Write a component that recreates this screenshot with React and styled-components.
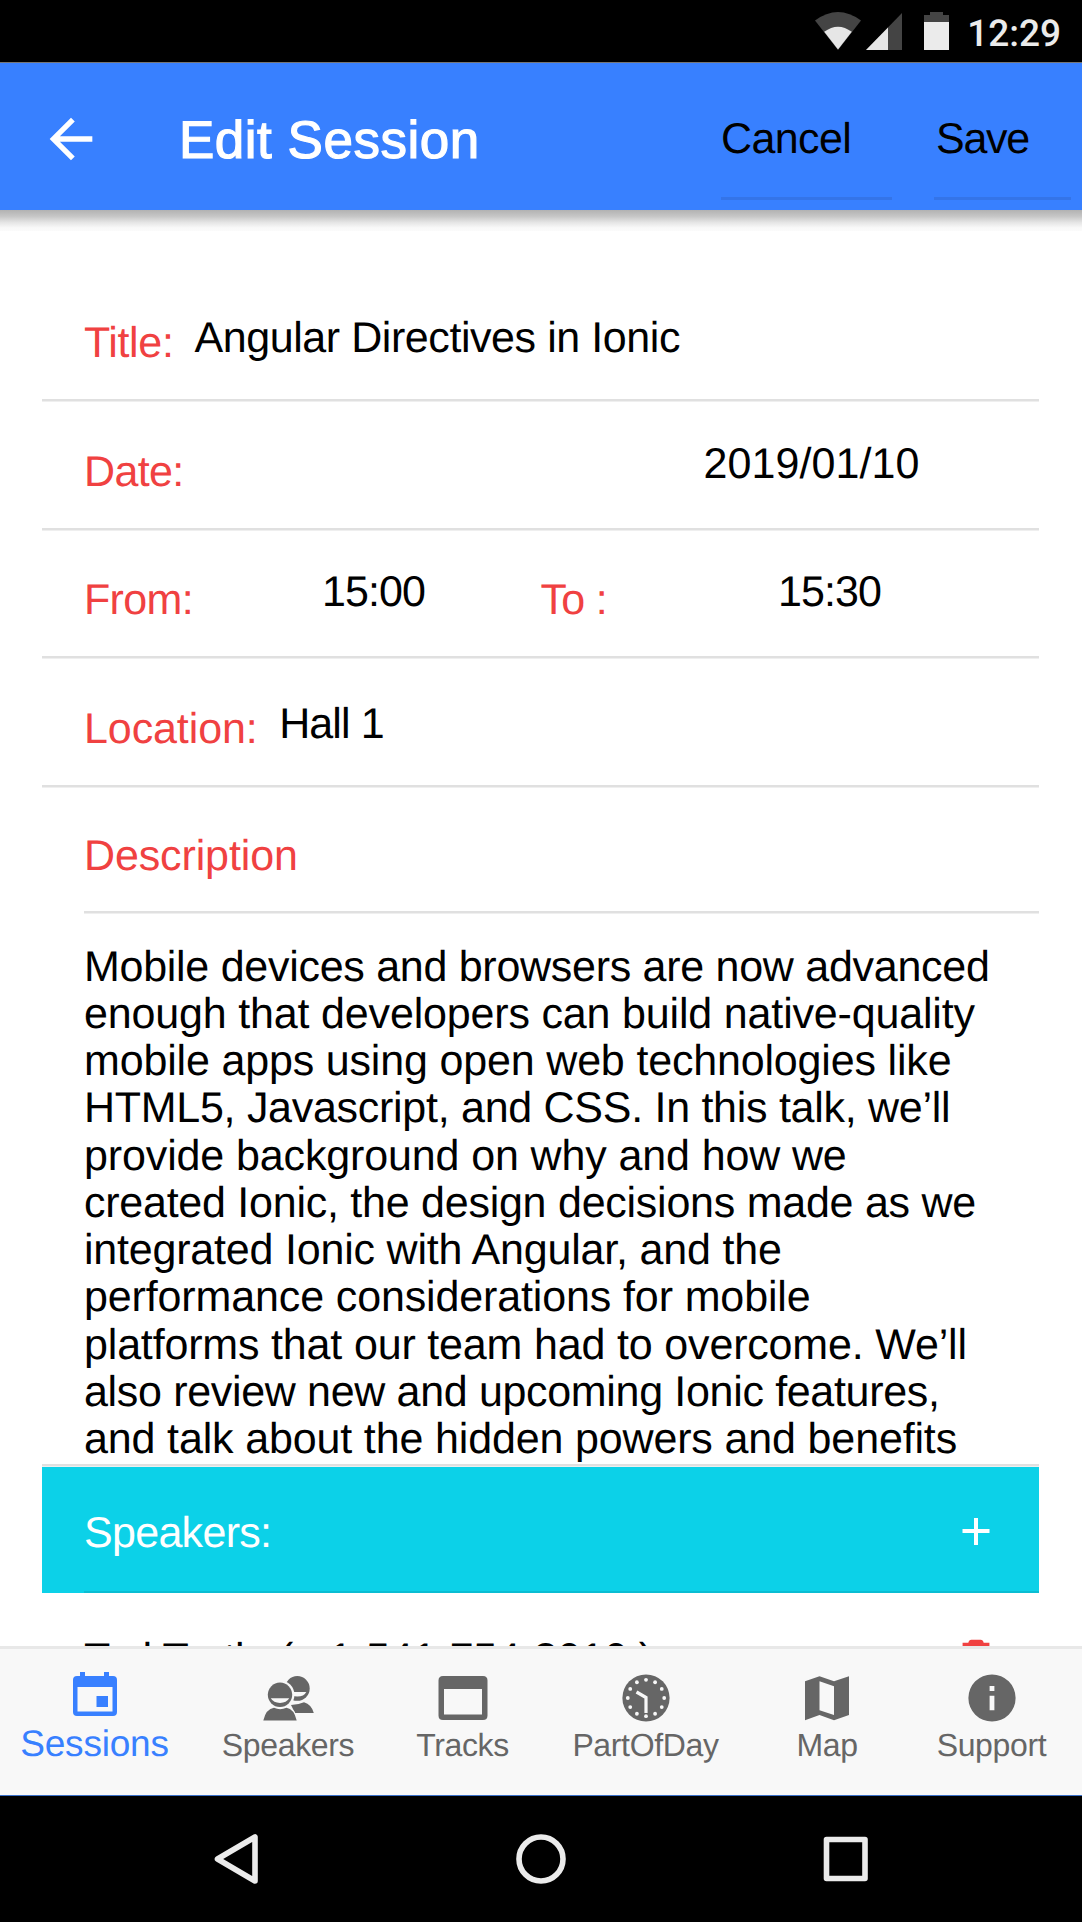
import React from "react";
import styled, { createGlobalStyle } from "styled-components";

const Global = createGlobalStyle`
  * { box-sizing: border-box; }
  body { margin: 0; background: #fff; font-family: "Liberation Sans", Arial, sans-serif; text-rendering: geometricPrecision; }
`;

const Screen = styled.div`
  width: 1082px;
  height: 1922px;
  display: flex;
  flex-direction: column;
  overflow: hidden;
  background: #fff;
`;

const StatusBar = styled.div`
  height: 63px;
  flex: none;
  background: #000;
  border-bottom: 1px solid #757575;
  display: flex;
  align-items: flex-start;
  justify-content: flex-end;
  padding: 12px 21px 0 0;
`;

const StatusIcon = styled.svg`
  display: block;
  flex: none;
  margin-right: ${(p) => p.$gap}px;
`;

const Clock = styled.span`
  font-family: Roboto, sans-serif;
  font-size: 37px;
  font-weight: 500;
  line-height: 42px;
  margin-top: 2px;
  color: #ebebeb;
`;

const Header = styled.header`
  height: 147px;
  flex: none;
  background: #3880ff;
  display: flex;
  align-items: flex-start;
  padding: 0 11px 0 39px;
`;

const HeaderShade = styled.div`
  height: 21px;
  flex: none;
  background: linear-gradient(#b2b2b2, #c6c6c6 30%, #e6e6e6 60%, #f9f9f9 85%, #fbfbfb);
`;

const BackIcon = styled.svg`
  flex: none;
  margin-top: 44px;
`;

const Heading = styled.h1`
  margin: 0 0 0 76px;
  flex: 1;
  font-size: 53px;
  font-weight: 400;
  line-height: 60px;
  padding-top: 48px;
  letter-spacing: 0.5px;
  color: #fff;
  -webkit-text-stroke: 1.2px #fff;
`;

const HeaderAction = styled.a`
  width: ${(p) => p.$width}px;
  height: 137px;
  margin-left: ${(p) => p.$gap || 0}px;
  padding: 51px 0 0 ${(p) => p.$indent || 0}px;
  font-size: 43px;
  line-height: 50px;
  letter-spacing: ${(p) => p.$track}px;
  color: #000;
  box-shadow: inset 0 -3px #3474e8;
`;

const Form = styled.main`
  flex: 1;
  min-height: 0;
  overflow: hidden;
  padding: 42px 42.6px 0 42px;
  font-size: 43px;
  line-height: 50px;
  letter-spacing: -0.2px;
`;

const rule = "inset 0 -1px #efefef, inset 0 -3px #e0e0e0";

const Row = styled.div`
  height: 128.8px;
  padding: 0 42px;
  display: flex;
  box-shadow: ${rule};
`;

const Label = styled.label`
  padding-top: 44.8px;
  margin-right: ${(p) => p.$gap || 0}px;
  letter-spacing: ${(p) => p.$track || -0.65}px;
  color: #f04141;
  white-space: nowrap;
`;

const Value = styled.span`
  padding-top: ${(p) => p.$top || 39.7}px;
  letter-spacing: ${(p) => p.$track || -0.43}px;
  white-space: nowrap;
`;

const Half = styled.div`
  display: flex;
  width: ${(p) => p.$width}px;
  justify-content: space-between;
`;

const Spacer = styled.div`
  flex: 1;
`;

const SectionLabel = styled.div`
  height: 126px;
  margin-left: 42px;
  padding-top: 42.5px;
  color: #f04141;
  letter-spacing: -0.12px;
  box-shadow: ${rule};
`;

const Description = styled.div`
  height: 553px;
  padding: 29.5px 0 0 42px;
  line-height: 47.25px;
  box-shadow: ${rule};
`;

const Line = styled.div`
  white-space: pre;
  letter-spacing: ${(p) => p.$track}px;
`;

const SpeakersBar = styled.div`
  height: 126px;
  background: #0cd1e8;
  color: #fff;
  padding-left: 42px;
`;

const SpeakersInner = styled.div`
  height: 100%;
  display: flex;
  justify-content: space-between;
  padding: 40.5px 40px 0 0;
  letter-spacing: -0.7px;
  box-shadow: inset 0 -2px #0bbdd2;
`;

const SpeakerRow = styled.div`
  display: flex;
  justify-content: space-between;
  padding: 41px 40px 0 42px;
  letter-spacing: -0.53px;
`;

const TabBar = styled.nav`
  height: 150px;
  flex: none;
  background: #f8f8f8;
  box-shadow: inset 0 3px #e8e8e8;
  border-bottom: 1px solid #3a70c8;
  display: grid;
  grid-template-columns: 189px 198px 151px 215px 148px 181px;
`;

const Tab = styled.a`
  display: flex;
  flex-direction: column;
  align-items: center;
  padding-top: ${(p) => (p.$active ? 17.5 : 22)}px;
  color: ${(p) => (p.$active ? "#3880ff" : "#666")};
  font-size: ${(p) => (p.$active ? 37 : 32)}px;
  letter-spacing: ${(p) => (p.$active ? -0.2 : -0.35)}px;
  line-height: 40px;
  white-space: nowrap;
`;

const TabIcon = styled.svg`
  display: block;
  width: 60px;
  height: 60px;
  margin-bottom: ${(p) => (p.$active ? 0 : -3)}px;
  fill: currentColor;
`;

const NavBar = styled.div`
  flex: none;
  height: 126px;
  background: #000;
  display: flex;
  justify-content: space-between;
  align-items: flex-start;
  padding: 34px 208px 0 208px;
`;

const NavIcon = styled.svg`
  width: 56px;
  height: 56px;
  fill: none;
  stroke: #ebebeb;
  stroke-width: 5.6;
  stroke-linejoin: round;
`;

const lines = [
  ["Mobile devices and browsers are now advanced", -0.28],
  ["enough that developers can build native-quality", -0.17],
  ["mobile apps using open web technologies like", -0.17],
  ["HTML5, Javascript, and CSS. In this talk, we’ll", -0.28],
  ["provide background on why and how we", -0.13],
  ["created Ionic, the design decisions made as we", -0.25],
  ["integrated Ionic with Angular, and the", -0.2],
  ["performance considerations for mobile", -0.13],
  ["platforms that our team had to overcome. We’ll", -0.17],
  ["also review new and upcoming Ionic features,", -0.33],
  ["and talk about the hidden powers and benefits", -0.15],
];

const dots = Array.from({ length: 12 }, (_, i) => {
  const a = (i * Math.PI) / 6;
  return [30 + 18.2 * Math.sin(a), 30 - 18.2 * Math.cos(a)];
});

const tabs = [
  {
    name: "Sessions",
    active: true,
    icon: (
      <path
        fillRule="evenodd"
        d="M12 12H15V8H20V12H39V8H44V12H48Q52 12 52 16V48Q52 52 48 52H12Q8 52 8 48V16Q8 12 12 12ZM12.5 23V47.5H47.5V23ZM31.5 32H43V43H31.5Z"
      />
    ),
  },
  {
    name: "Speakers",
    icon: (
      <g>
        <circle cx="39.3" cy="20.4" r="12.4" />
        <path d="M30 24H48.3Q46 28.600 39.300 28.600Q33 28.600 30 24Z" fill="#f8f8f8" />
        <path d="M33 37Q40 37 46 34.300Q53.500 36.500 55.800 45H37Z" />
        <circle cx="22" cy="26.8" r="14.4" fill="#f8f8f8" />
        <circle cx="22" cy="26.8" r="12.2" />
        <path d="M12.800 30.300H31.200Q28.500 34.900 22 34.900Q15.500 34.900 12.800 30.300Z" fill="#f8f8f8" />
        <path
          d="M5.300 52.500Q8 41 16 39.800Q22 42.500 28.500 39.800Q36 41 38.700 52.500Z"
          stroke="#f8f8f8"
          strokeWidth="2.5"
          paintOrder="stroke"
        />
      </g>
    ),
  },
  {
    name: "Tracks",
    icon: (
      <path
        fillRule="evenodd"
        d="M10 8H50Q54.5 8 54.5 12.5V47.5Q54.5 52 50 52H10Q5.5 52 5.5 47.5V12.5Q5.5 8 10 8ZM11 21V46.5H49V21Z"
      />
    ),
  },
  {
    name: "PartOfDay",
    icon: (
      <g>
        <circle cx="30" cy="30" r="23.6" />
        {dots.map(([x, y], i) => (
          <circle key={i} cx={x} cy={y} r="1.9" fill="#f8f8f8" />
        ))}
        <path d="M20.5 24L30 29.5V45" fill="none" stroke="#f8f8f8" strokeWidth="3.2" />
      </g>
    ),
  },
  {
    name: "Map",
    icon: (
      <path
        fillRule="evenodd"
        d="M8 13.3L22.5 8.2L37 13.3L52 8.2V47L37 52.2L22.5 47L8 52.2ZM22.5 13.3V42.2L37 47V18.2Z"
      />
    ),
  },
  {
    name: "Support",
    icon: (
      <path
        fillRule="evenodd"
        d="M30 6.4A23.6 23.6 0 1 1 30 53.6A23.6 23.6 0 1 1 30 6.4ZM27.6 18V23H32.4V18ZM27.6 27.8V42.3H32.4V27.8Z"
      />
    ),
  },
];

export default function App() {
  return (
    <Screen>
      <Global />
      <StatusBar>
        <StatusIcon $gap={5} width="46" height="38" viewBox="0 0 46 38">
          <path d="M0 8.5Q23 -8.5 46 8.5L23 38Z" fill="#444" />
          <path d="M9.2 19.8Q23 9.5 36.8 19.8L23 37.5Z" fill="#e6e6e6" />
        </StatusIcon>
        <StatusIcon $gap={22} width="36" height="38" viewBox="0 0 36 38">
          <path d="M36 1V38H0Z" fill="#444" />
          <path d="M22 15.4V38H0Z" fill="#e6e6e6" />
        </StatusIcon>
        <StatusIcon $gap={18} width="25" height="38" viewBox="0 0 25 38">
          <path d="M6 0H19V3H25V11H0V3H6Z" fill="#444" />
          <path d="M0 10H25V38H0Z" fill="#ebebeb" />
        </StatusIcon>
        <Clock>12:29</Clock>
      </StatusBar>
      <Header>
        <BackIcon width="64" height="64" viewBox="0 0 24 24" fill="#fff">
          <path d="M20 11H7.83l5.59-5.59L12 4l-8 8 8 8 1.41-1.41L7.83 13H20v-2z" />
        </BackIcon>
        <Heading>Edit Session</Heading>
        <HeaderAction $width={171} $track={-0.6}>Cancel</HeaderAction>
        <HeaderAction $width={137} $gap={42} $indent={2} $track={-1.3}>Save</HeaderAction>
      </Header>
      <HeaderShade />
      <Form>
        <Row>
          <Label $gap={21} $track={-0.35}>Title:</Label>
          <Value>Angular Directives in Ionic</Value>
        </Row>
        <Row>
          <Label>Date:</Label>
          <Spacer />
          <Half $width={294}>
            <Value $top={37} $track={0.1}>2019/01/10</Value>
          </Half>
        </Row>
        <Row>
          <Half $width={341}>
            <Label>From:</Label>
            <Value $top={36.3} $track={-0.9}>15:00</Value>
          </Half>
          <Spacer />
          <Half $width={457}>
            <Label>To :</Label>
            <Half $width={219.5}>
              <Value $top={36.3} $track={-0.9}>15:30</Value>
            </Half>
          </Half>
        </Row>
        <Row>
          <Label $gap={21.5} $track={-0.1}>Location:</Label>
          <Value $track={-0.9}>Hall 1</Value>
        </Row>
        <SectionLabel>Description</SectionLabel>
        <Description>
          {lines.map(([text, track]) => (
            <Line key={text} $track={track}>{text}</Line>
          ))}
        </Description>
        <SpeakersBar>
          <SpeakersInner>
            <span>Speakers:</span>
            <svg width="46" height="46" viewBox="0 0 46 46" fill="#fff">
              <path d="M21 10H25V21H36.5V25H25V37H21V25H9.5V21H21Z" />
            </svg>
          </SpeakersInner>
        </SpeakersBar>
        <SpeakerRow>
          <span>Ted Turtle ( +1-541-754-3010 )</span>
          <svg width="46" height="46" viewBox="0 0 24 24" fill="#f04141">
            <path d="M6 19c0 1.1.9 2 2 2h8c1.1 0 2-.9 2-2V7H6v12zM19 4.600h-3q-.3-1.600-1.600-1.600h-4.800q-1.300 0-1.600 1.600H5v1.600h14z" />
          </svg>
        </SpeakerRow>
      </Form>
      <TabBar>
        {tabs.map((t) => (
          <Tab key={t.name} $active={t.active}>
            <TabIcon $active={t.active} viewBox="0 0 60 60">{t.icon}</TabIcon>
            {t.name}
          </Tab>
        ))}
      </TabBar>
      <NavBar>
        <NavIcon viewBox="0 0 56 56">
          <path d="M9.5 29L47 7V51Z" />
        </NavIcon>
        <NavIcon viewBox="0 0 56 56">
          <circle cx="28" cy="29" r="22" />
        </NavIcon>
        <NavIcon viewBox="0 0 56 56">
          <rect x="8.5" y="9.5" width="38.5" height="39" />
        </NavIcon>
      </NavBar>
    </Screen>
  );
}
